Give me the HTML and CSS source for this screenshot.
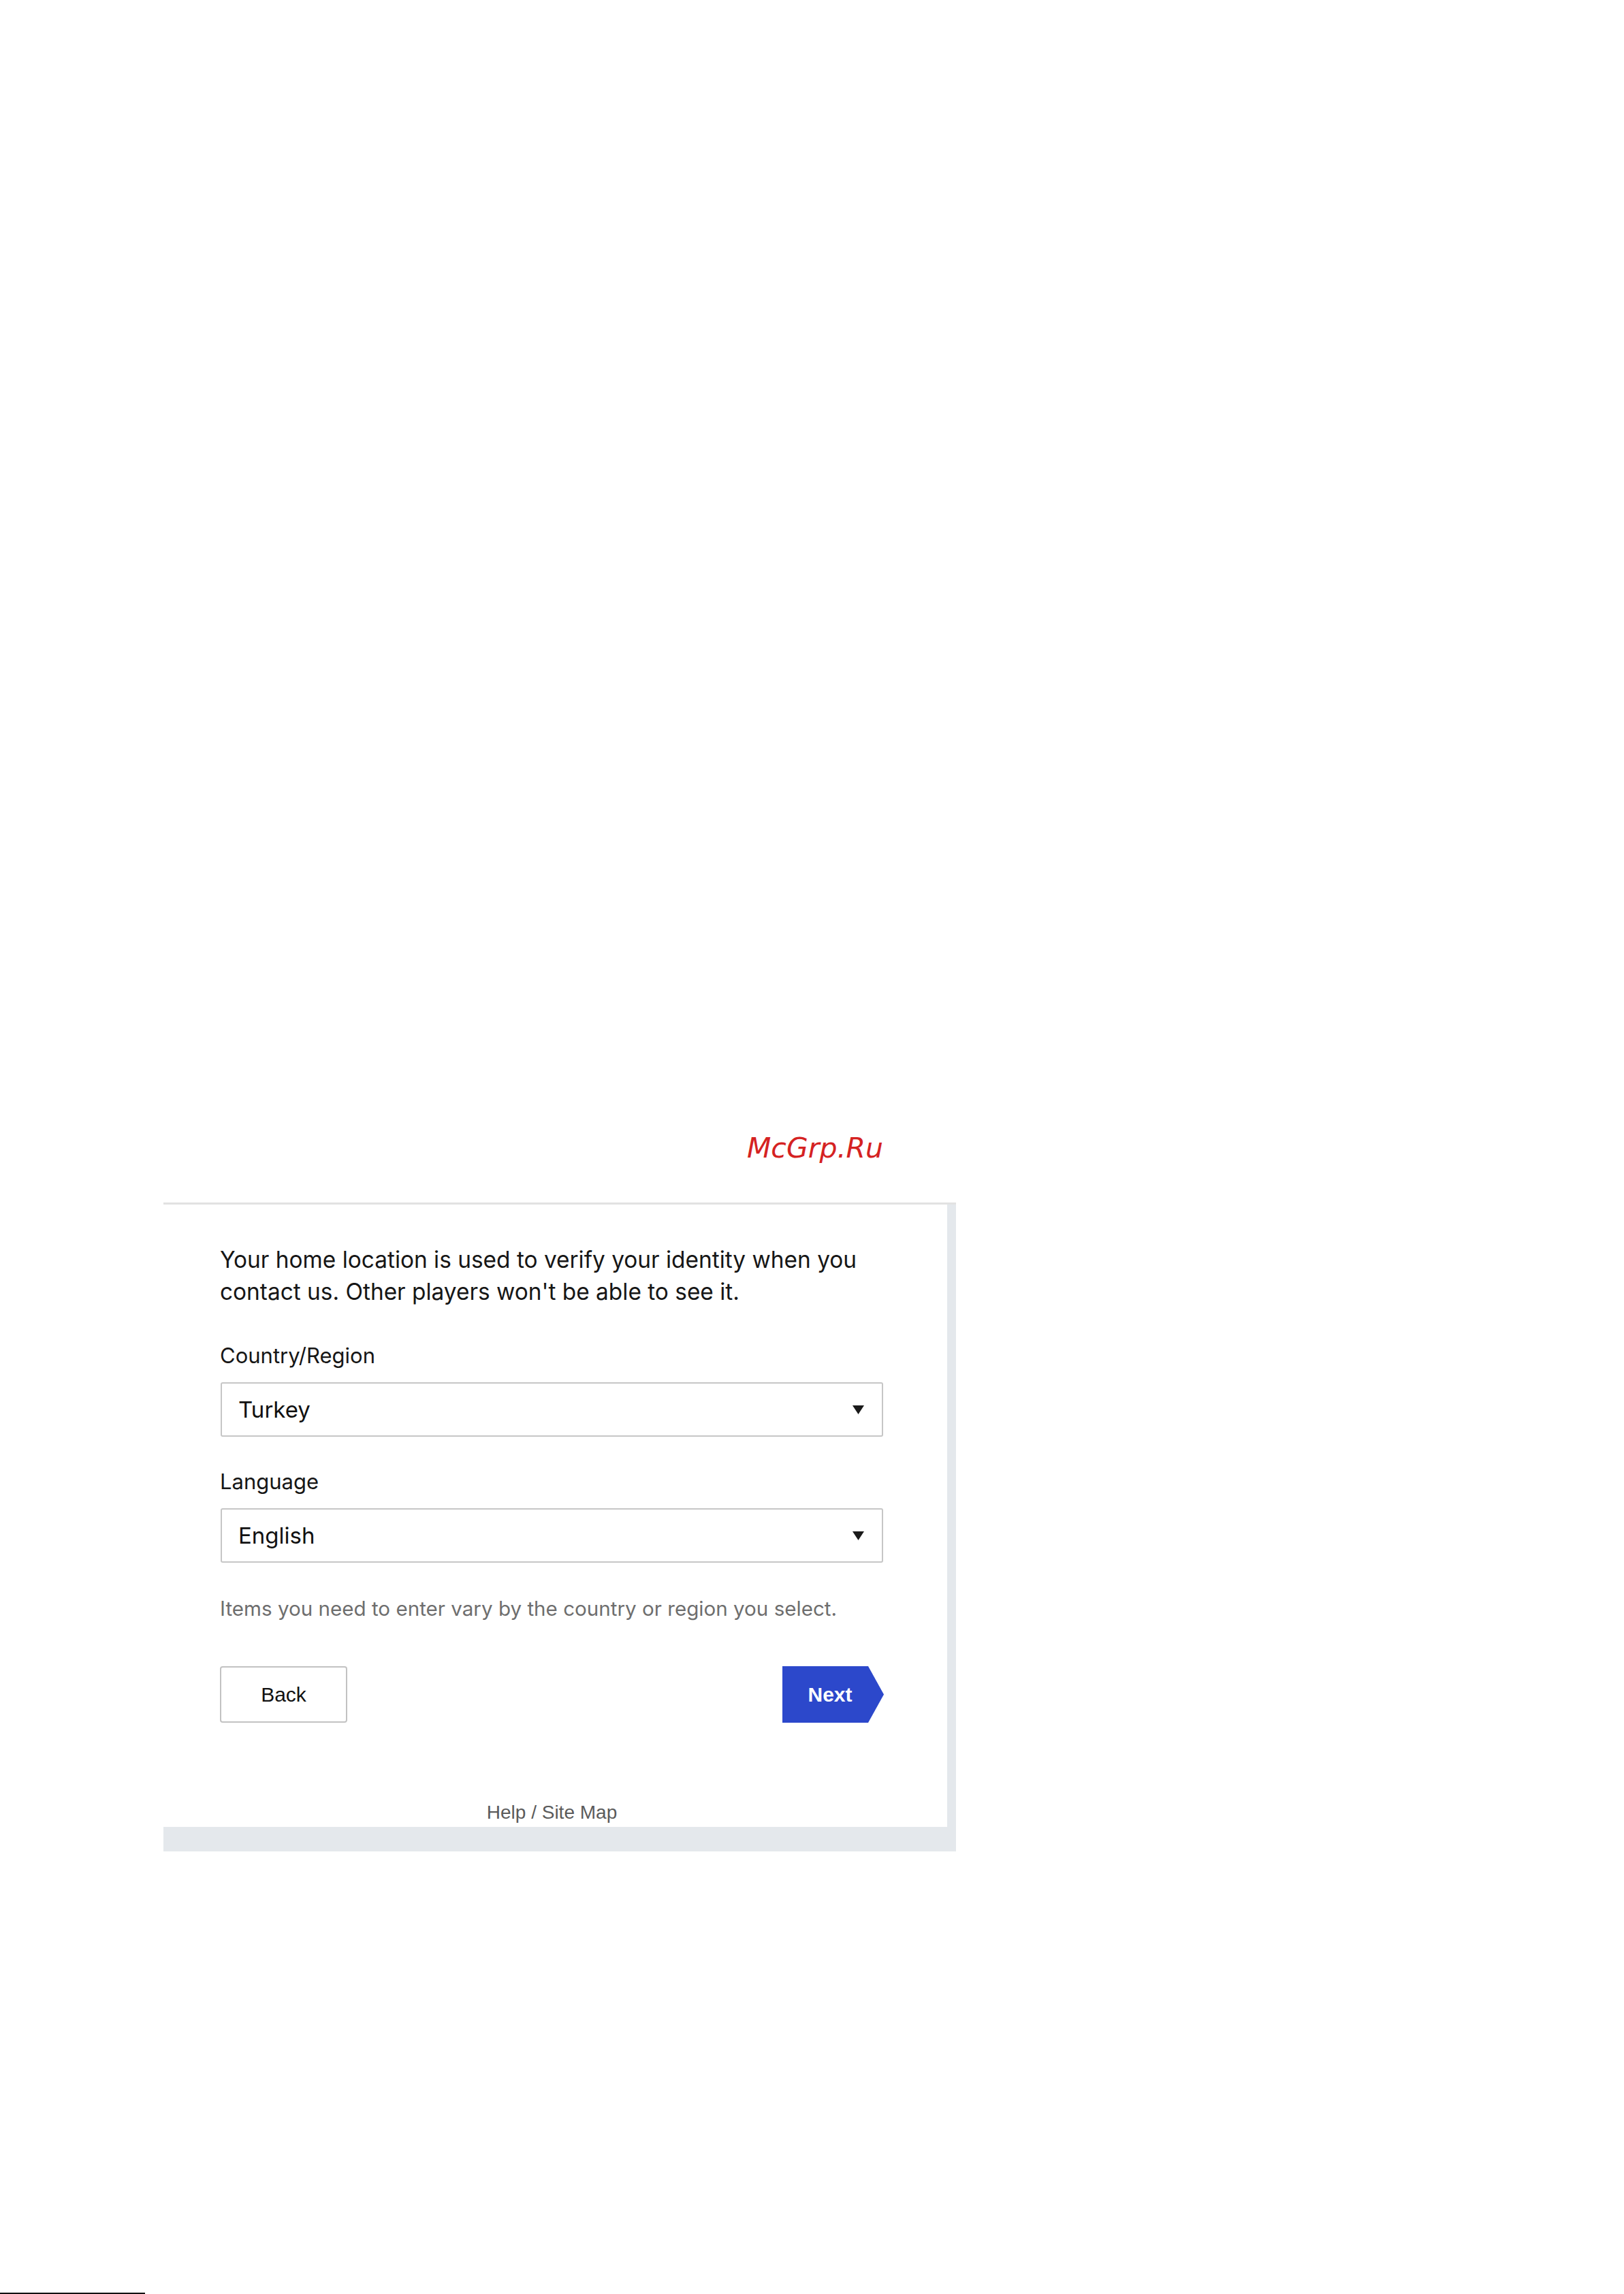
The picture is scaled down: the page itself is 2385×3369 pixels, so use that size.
FILE: index.html
```html
<!DOCTYPE html>
<html>
	<head>
		<meta charset="UTF-8">
		<title>Home location</title>
		<link rel="stylesheet" href="styles.css">
	</head>
	<body>
		<div class="page">
			<div class="brand">McGrp.Ru</div>
			<div class="shot">
				<div class="card">
					<p class="intro">Your home location is used to verify your identity when you contact us. Other players won't be able to see it.</p>
					<div class="field field-first">
						<div class="label">Country/Region</div>
						<div class="select">
							<span class="select-value">Turkey</span>
							<svg class="caret" width="17" height="13" viewBox="0 0 17 13"><path d="M0 0H17L8.5 13Z" fill="#1a1a1a"/></svg>
						</div>
					</div>
					<div class="field">
						<div class="label">Language</div>
						<div class="select">
							<span class="select-value">English</span>
							<svg class="caret" width="17" height="13" viewBox="0 0 17 13"><path d="M0 0H17L8.5 13Z" fill="#1a1a1a"/></svg>
						</div>
					</div>
					<p class="note">Items you need to enter vary by the country or region you select.</p>
					<div class="actions">
						<a class="btn-back" href="javascript:;">Back</a>
						<a class="btn-next" href="javascript:;">Next</a>
					</div>
					<div class="links">Help / Site Map</div>
				</div>
			</div>
			<div class="rule"></div>
		</div>
	</body>
</html>
```
FILE: styles.css
```css
*{
	margin: 0;
	padding: 0;
	box-sizing: border-box;
}
body{
	background-color: #fff;
}
.page{
	height: 3369px;
	padding-top: 1662px;
	display: flex;
	flex-direction: column;
}
.brand{
	margin-left: 1097px;
	font: italic 41px/48px "DejaVu Sans", sans-serif;
	color: #d52222;
}
.shot{
	width: 1164px;
	margin: 56px 0 0 240px;
	border-top: 3px solid #e2e2e2;
	background-color: #e4e8ec;
	padding: 0 13px 36px 0;
}
.card{
	background-color: #fff;
	padding: 58px 94px 4px 83px;
	font-family: Inter, "Liberation Sans", sans-serif;
	color: #161616;
}
.intro{
	font-size: 33.4px;
	line-height: 47px;
}
.field{
	margin-top: 46px;
}
.field-first{
	margin-top: 50px;
}
.label{
	font-size: 31px;
	line-height: 40px;
	margin-bottom: 19px;
}
.select{
	height: 80px;
	margin-left: 1px;
	border: 2px solid #c6c6c6;
	border-radius: 3px;
	padding: 0 26px 0 24px;
	display: flex;
	align-items: center;
	justify-content: space-between;
}
.select-value{
	font-size: 33px;
	line-height: 40px;
	color: #111;
}
.note{
	margin-top: 47px;
	font-size: 29.6px;
	line-height: 40px;
	color: #6e6e6e;
}
.actions{
	margin-top: 65px;
	display: flex;
	justify-content: space-between;
	font-family: "Liberation Sans", Arial, sans-serif;
	font-size: 30px;
}
.actions a{
	height: 83px;
	display: flex;
	align-items: center;
	justify-content: center;
	text-decoration: none;
}
.btn-back{
	width: 187px;
	border: 2px solid #c2c2c2;
	border-radius: 4px;
	color: #111;
}
.btn-next{
	width: 149px;
	margin-right: -1px;
	padding-right: 9px;
	background-color: #2c48cb;
	color: #fff;
	font-weight: bold;
	clip-path: polygon(0 0, 126px 0, 100% 50%, 126px 100%, 0 100%);
}
.links{
	margin-top: 115px;
	padding-left: 1px;
	text-align: center;
	font: 28px/34px "Liberation Sans", Arial, sans-serif;
	color: #5b5b5b;
}
.rule{
	margin-top: auto;
	width: 213px;
	height: 2px;
	background-color: #111;
}
```
